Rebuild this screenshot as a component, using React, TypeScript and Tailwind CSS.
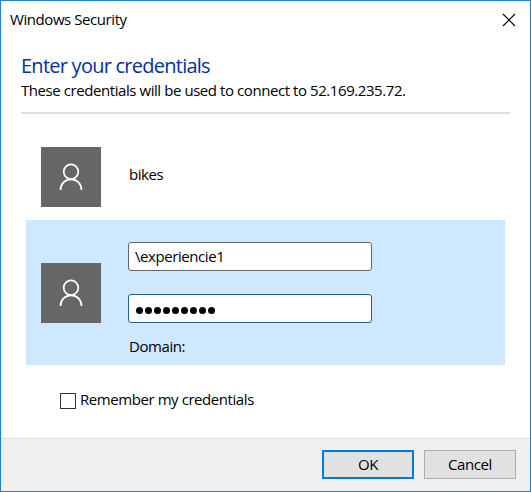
function Avatar() {
  return (
    <div className="flex h-[60px] w-[60px] shrink-0 items-center justify-center bg-[#666666]">
      <svg width="60" height="60" viewBox="0 0 60 60" fill="none" stroke="#fff" strokeWidth="1.7">
        <circle cx="30" cy="24.7" r="7.3" />
        <path d="M19.5 43C19.5 36.8 24 32.3 30 32.3S40.5 36.8 40.5 43" />
      </svg>
    </div>
  );
}

export default function App() {
  return (
    <div className="flex h-[492px] w-[531px] flex-col border border-[#1883d7] bg-white font-['Open_Sans','Noto_Sans',sans-serif] text-[15px] leading-5 tracking-[-0.43px] text-black">
      <header className="flex h-[37px] shrink-0 items-center justify-between pr-[14px] pl-[9px]">
        <h1 className="pb-0.5">Windows Security</h1>
        <button aria-label="Close">
          <svg width="14" height="14" viewBox="0 0 14 14" stroke="#000" strokeWidth="1.1">
            <path d="M1 1L13 13M13 1L1 13" />
          </svg>
        </button>
      </header>

      <main className="flex flex-1 flex-col">
        <div className="mx-5 flex h-[76px] flex-col border-b-2 border-[#dedede] pt-[14px]">
          <h2 className="text-[20px] leading-7 tracking-[-0.75px] text-[#003399]">Enter your credentials</h2>
          <p>These credentials will be used to connect to 52.169.235.72.</p>
        </div>

        <div className="mx-[25px] mt-[33px] flex h-[60px] items-center gap-7 pl-[15px]">
          <Avatar />
          <span className="-mt-1.5">bikes</span>
        </div>

        <div className="mx-[25px] mt-[13px] flex h-[145px] gap-[27px] bg-[#cde8ff] pl-[15px]">
          <div className="pt-[43px]">
            <Avatar />
          </div>
          <div className="flex flex-col pt-[22px]">
            <div className="flex h-[29px] w-[244px] items-center rounded-[3px] border border-[#666666] bg-white pb-0.5 pl-1.5">
              \experiencie1
            </div>
            <div className="mt-[23px] flex h-[29px] w-[244px] items-center gap-[2px] rounded-[3px] border border-[#2a5f8f] bg-white pt-[3px] pl-[7px]">
              {Array.from({ length: 9 }, (_, i) => (
                <span key={i} className="h-[7px] w-[7px] rounded-full bg-black" />
              ))}
            </div>
            <span className="mt-[13px] ml-px">Domain:</span>
          </div>
        </div>

        <label className="mt-[24px] ml-[59px] flex items-center gap-1">
          <span className="mt-1 h-4 w-4 border border-[#333333] bg-white" />
          <span>Remember my credentials</span>
        </label>
      </main>

      <footer className="flex h-[53px] shrink-0 justify-end gap-2.5 border-t border-[#dfdfdf] bg-[#f0f0f0] pt-[11px] pr-[14px]">
        <button className="h-[29px] w-[92px] border-2 border-[#0078d7] bg-[#e1e1e1] pb-0.5">OK</button>
        <button className="h-[29px] w-[92px] border border-[#adadad] bg-[#e1e1e1] pb-0.5">Cancel</button>
      </footer>
    </div>
  );
}
